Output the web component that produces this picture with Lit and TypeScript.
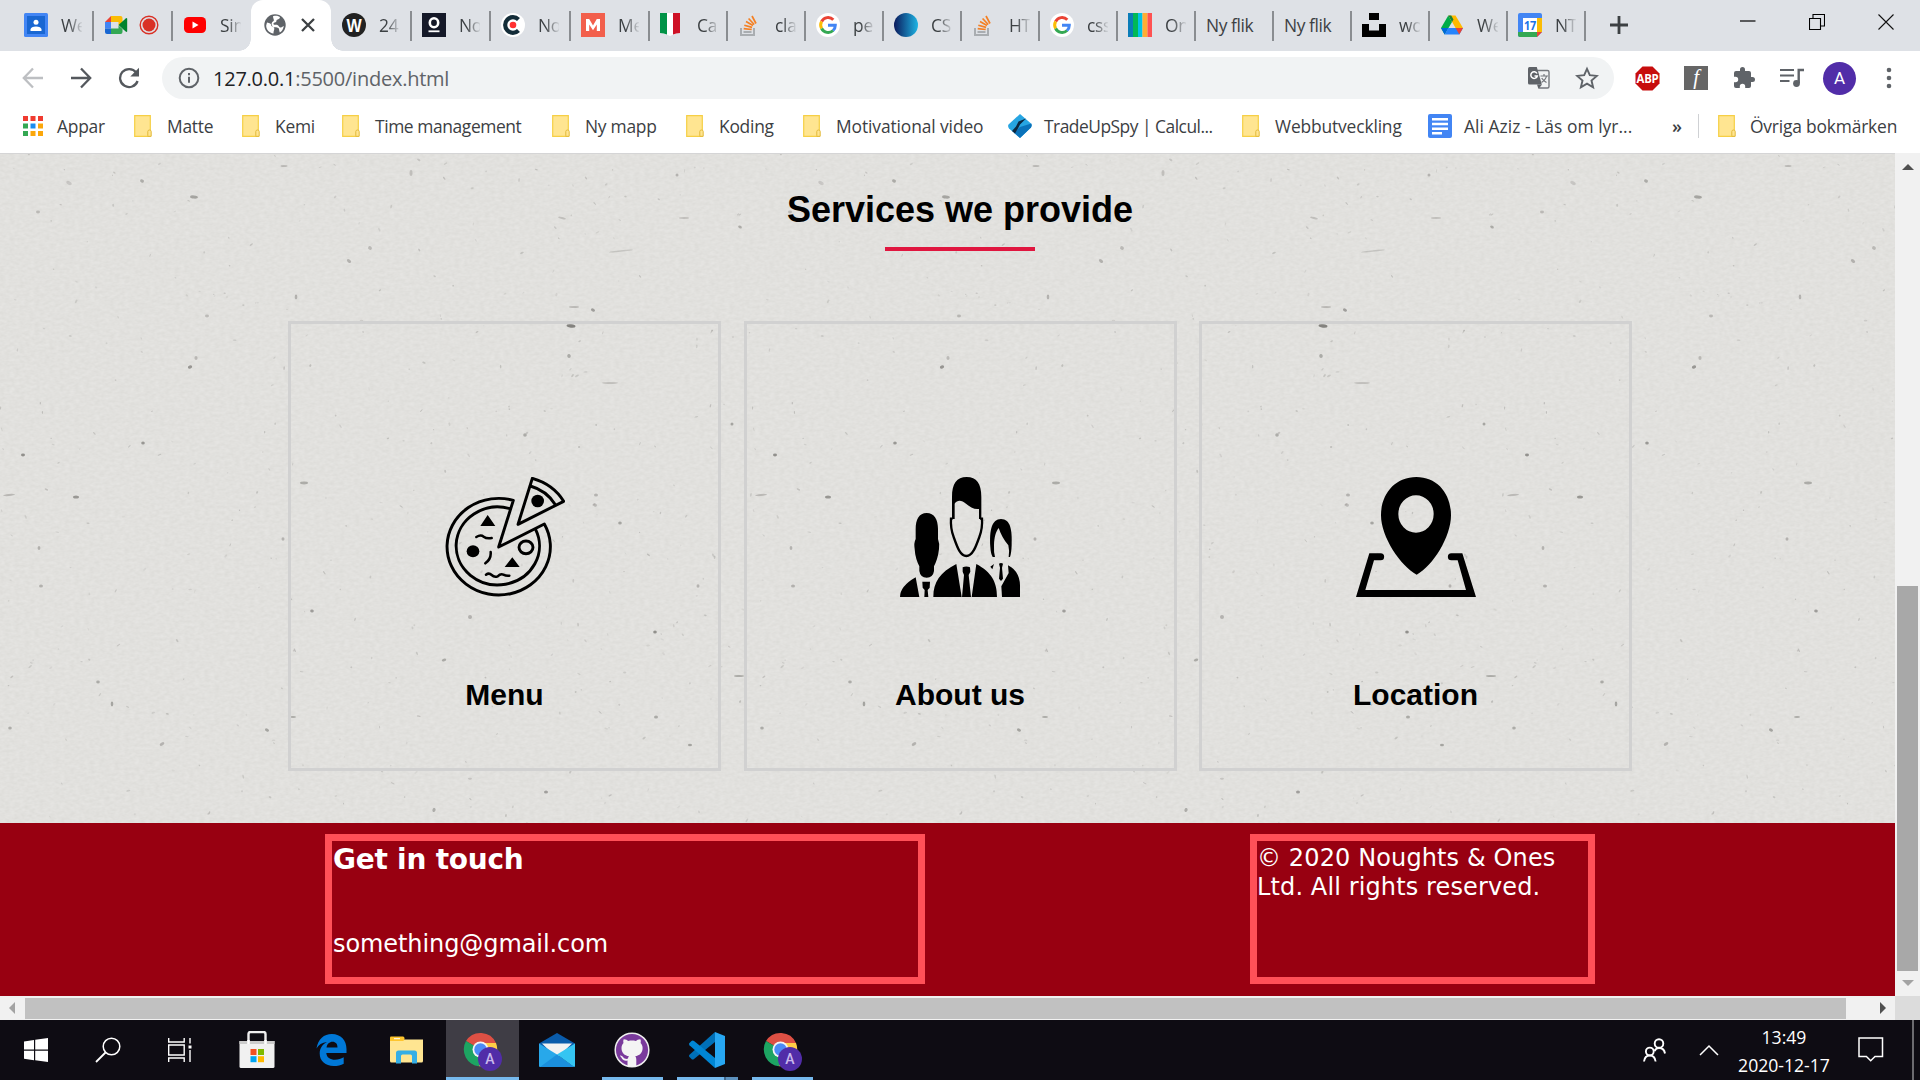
import { LitElement, html, svg, css, nothing } from "lit";
import type { TemplateResult } from "lit";
import { customElement } from "lit/decorators.js";
import { classMap } from "lit/directives/class-map.js";
import { styleMap } from "lit/directives/style-map.js";

type Icon = TemplateResult | typeof nothing;

const draw = (w: number, h: number, box: string, body: unknown) =>
  html`<svg width=${w} height=${h} viewBox=${box} preserveAspectRatio="none" fill="none" aria-hidden="true">${body}</svg>`;
const fav = (body: unknown) => draw(24, 24, "0 0 24 24", body);

/* ---------- favicons ---------- */
const classroom = fav(svg`<rect width="24" height="24" rx="1.5" fill="#4285f4"/><rect x="3" y="3" width="18" height="18" fill="#1967d2"/><circle cx="12" cy="9.3" r="2.5" fill="#fff"/><path d="M6.5 18v-1.6c0-2 2.5-3 5.500-3s5.500 1 5.500 3V18z" fill="#fff"/>`);
const meet = draw(23, 24, "0 0 23 24", svg`<path d="M0 9l6-6v6z" fill="#ea4335"/><path d="M6 3h9.500q2 0 2 2v4.500l-4 3V9H6z" fill="#fbbc04"/><path d="M0 9h6v6.500H0z" fill="#4285f4"/><path d="M0 15.500h6v5.500H2q-2 0-2-2z" fill="#1967d2"/><path d="M6 15.500h7.500v-3l4 3.500v3q0 2-2 2H6z" fill="#34a853"/><path d="M13.500 12l7.200-6.600q1.500-1 1.500.6v12q0 1.600-1.500.6z" fill="#00832d"/>`);
const rec = draw(20, 20, "0 0 20 20", svg`<circle cx="10" cy="10" r="8.800" stroke="#d93025" stroke-width="1.400"/><circle cx="10" cy="10" r="6.500" fill="#d93025"/>`);
const youtube = fav(svg`<rect x="1" y="4" width="22" height="16" rx="4.500" fill="#f00"/><path d="M9.500 8.500v7l6-3.500z" fill="#fff"/>`);
const globe = draw(24, 24, "0 0 24 24", svg`<circle cx="12" cy="12" r="10.700" fill="#5f6368"/><path d="M4 9.500c3 .5 4 1 4.300 3 .3 1.500 2.700 1 3 3 .2 1.500-1 2.500-.8 5C6 20 3 16 3.200 12.500zM10 3.200c4-.8 5.500 0 7 1-.5 2-2 2-3 2.500-1 .6 0 2-1.500 2.500-1.300.4-2.500.8-2 2 .6 1 2.500.2 4 .7 1.600.6 1.500 2.400 3 2.600 1.500.2 2.500-1.500 3.300-1.500-.3 3-2 5.300-4 6.500-1-2-.2-3.500-1.500-4.500-1.500-1-4.500.3-6-2C8 11 8.500 9 10.500 8c1-.6-.5-3-.5-4.800z" fill="#fff"/>`);
const dark24 = fav(svg`<circle cx="12" cy="12" r="12" fill="#222"/><text x="12" y="19" text-anchor="middle" font-family="Liberation Sans" font-weight="700" font-size="19" textLength="15" lengthAdjust="spacingAndGlyphs" fill="#fff">W</text>`);
const noughts = fav(svg`<rect width="24" height="24" fill="#151928"/><ellipse cx="12" cy="9.800" rx="4.200" ry="4.500" stroke="#fff" stroke-width="2.600"/><path d="M6.500 18.300h11" stroke="#fff" stroke-width="1.800"/>`);
const codecamp = fav(svg`<circle cx="12" cy="12" r="12" fill="#fff"/><path d="M17.500 6.500A7.800 7.800 0 1 0 17.500 17.500" stroke="#132c38" stroke-width="4.200"/><circle cx="12" cy="12" r="3.300" fill="#ff3131"/>`);
const mRed = fav(svg`<rect width="24" height="24" fill="#f25f4c"/><path d="M5 18V6h3.200L12 12.500 15.800 6H19v12h-3.200v-6.500L12 17.300 8.200 11.500V18z" fill="#fff"/>`);
const italy = draw(20, 24, "0 0 20 24", svg`<path d="M0 0h20v20q-4 0-10 3Q4 20 0 20z" fill="#fff"/><path d="M0 0h7v21.500Q4 20 0 20z" fill="#009246"/><path d="M13 0h7v20q-4 0-7 1.500z" fill="#ce1126"/>`);
const stack = fav(svg`<path d="M3 15v7h13v-7" stroke="#a9adb1" stroke-width="2"/><path d="M5.500 19h8" stroke="#a9adb1" stroke-width="2"/><path d="M5.700 15.700l8 .8M6.300 12.200l7.800 2.200M8 8.600l7 4M10.600 5.500l5.600 6M14 3l4 7.500" stroke="#f48024" stroke-width="1.700"/>`);
const google = fav(svg`<circle cx="12" cy="12" r="12" fill="#fff"/><path d="M17.300 6.700A7.300 7.300 0 0 0 5.600 8.500" stroke="#ea4335" stroke-width="3"/><path d="M5.600 8.500a7.300 7.300 0 0 0 0 7" stroke="#fbbc05" stroke-width="3"/><path d="M5.600 15.500a7.300 7.300 0 0 0 11.500 2" stroke="#34a853" stroke-width="3"/><path d="M17 17.500a7.300 7.300 0 0 0 2.300-5.300H12" stroke="#4285f4" stroke-width="3"/>`);
const cssOrb = fav(svg`<defs><linearGradient id="orb"><stop offset="0" stop-color="#0b1a5c"/><stop offset="1" stop-color="#1eb4e4"/></linearGradient></defs><circle cx="12" cy="12" r="12" fill="url(#orb)"/>`);
const stripes = fav(svg`<path d="M0 0h5v24H0z" fill="#0a7cb8"/><path d="M5 0h5v24H5z" fill="#00b956"/><path d="M10 0h4.500v24H10z" fill="#00c2e8"/><path d="M14.500 0h5v24h-5z" fill="#ffad33"/><path d="M19.500 0H24v24h-4.500z" fill="#ff5252"/>`);
const unsplash = fav(svg`<path d="M7 0h10v7H7zM0 11h7v6.500h10V11h7v13H0z" fill="#000"/>`);
const drive = draw(24, 24, "0 0 24 24", svg`<path d="M8.300 2.500L1 15l3.700 6.500L12 9z" fill="#00ac47"/><path d="M8.500 2.500h7L23 15h-7.400z" fill="#ffba00"/><path d="M8.300 2.500L12 9l1.500-2.500-2.300-4z" fill="#188038"/><path d="M1 15h7.300l-3.600 6.500z" fill="#0066da"/><path d="M8.300 15H23l-3.700 6.500H4.700z" fill="#2684fc"/><path d="M15.600 15H23l-3.700 6.500z" fill="#ea4335"/>`);
const calendar = fav(svg`<path d="M0 2q0-2 2-2h20q2 0 2 2v17l-5 5H2q-2 0-2-2z" fill="#4285f4"/><path d="M19 5h5v14h-5z" fill="#fbbc04"/><path d="M0 19h19v5H2q-2 0-2-2z" fill="#34a853"/><path d="M19 19h5l-5 5z" fill="#ea4335"/><path d="M5 5h14v14H5z" fill="#fff"/><text x="12" y="16.500" text-anchor="middle" font-family="Open Sans" font-weight="700" font-size="12" textLength="12" lengthAdjust="spacingAndGlyphs" fill="#1a73e8">17</text>`);

/* ---------- bookmark icons ---------- */
const apps = draw(20, 20, "0 0 20 20", svg`<path d="M0 0h5v5H0zM7.500 0h5v5h-5zM15 0h5v5h-5z" fill="#f03b30"/><path d="M0 7.500h5v5H0zM0 15h5v5H0z" fill="#34a853"/><path d="M7.500 7.500h5v5h-5z" fill="#1a8cf0"/><path d="M15 7.500h5v5h-5zM7.500 15h5v5h-5zM15 15h5v5h-5z" fill="#fba70b"/>`);
const folder = draw(18, 22, "0 0 18 22", svg`<path d="M.7.700h15.600v20.600H.7z" fill="#ffe591" stroke="#f6cf45" stroke-width="1.200"/><path d="M13.800 20.500v-4q0-1.500 1.700-1.500t1.700 1.500v4.800h-3.400z" fill="#ffe591" stroke="#e3b93a" stroke-width="1"/>`);
const trade = draw(24, 24, "0 0 24 24", svg`<path d="M12 0L23 9.500q1 1.500 0 4L12 24 1 14.500q-1.500-2-.5-4z" fill="#27a5e2"/><path d="M12 13L23.300 9.500q.8 2-.3 4L12 24 6 18.800z" fill="#0a72ba"/><path d="M18 4.500l-6 6-1.500 3-3.500 6-3-2.500 4-4.500 2.500-5z" fill="#0b2740"/>`);
const docs = draw(24, 24, "0 0 24 24", svg`<rect width="24" height="24" rx="2" fill="#4285f4"/><path d="M4 5.300h16M4 10h16M4 14.700h16M4 19.300h10" stroke="#fff" stroke-width="2.400"/>`);

/* ---------- toolbar icons ---------- */
const back = draw(22, 22, "0 0 22 22", svg`<path d="M21 11H2M11 1.500L1.800 11l9.200 9.500" stroke="#bdbfc2" stroke-width="2.300"/>`);
const forward = draw(22, 22, "0 0 22 22", svg`<path d="M1 11h19M11 1.500l9.200 9.500-9.200 9.500" stroke="#54585d" stroke-width="2.300"/>`);
const reload = draw(22, 22, "0 0 22 22", svg`<path d="M18.200 5.500a9 9 0 1 0 1.400 8.500" stroke="#54585d" stroke-width="2.300"/><path d="M21 .8v8.700h-8.700z" fill="#54585d"/>`);
const info = draw(22, 22, "0 0 22 22", svg`<circle cx="11" cy="11" r="9.300" stroke="#5f6368" stroke-width="2"/><path d="M11 9.800v6M11 6v2.200" stroke="#5f6368" stroke-width="2"/>`);
const translate = draw(22, 22, "0 0 22 22", svg`<path d="M9 3.500h10.500q1.500 0 1.500 1.500v14.500q0 1.500-1.500 1.500H11" stroke="#75787d" stroke-width="1.400"/><path d="M1.500 0h7.300l5 17.500H1.500Q0 17.500 0 16V1.500Q0 0 1.500 0z" fill="#5f6368"/><path d="M14 17.500L10.500 22 9 17.500z" fill="#5f6368"/><path d="M9 6.500A3.300 3.300 0 1 0 9.300 9H6.500" stroke="#fff" stroke-width="1.500"/><path d="M12.500 9h7.500M16 7v2M18.500 9c-.5 3-3 5-5 6.500M13.700 11c1 2 3 3.500 4.800 4.500" stroke="#75787d" stroke-width="1.200"/>`);
const star = draw(24, 24, "0 0 24 24", svg`<path d="M12 2.800l2.800 6.400 7 .7-5.300 4.600 1.600 6.800-6.100-3.600-6.100 3.600 1.600-6.800L2.200 9.900l7-.7z" stroke="#5f6368" stroke-width="1.900"/>`);
const abp = draw(25, 25, "0 0 25 25", svg`<path d="M7.500.5h10l7 7v10l-7 7h-10l-7-7v-10z" fill="#c70d0d"/><text x="12.500" y="17" text-anchor="middle" font-family="Open Sans" font-weight="700" font-size="12.500" textLength="22" lengthAdjust="spacingAndGlyphs" fill="#fff">ABP</text>`);
const fScript = draw(24, 24, "0 0 24 24", svg`<rect width="24" height="24" fill="#666"/><text x="12" y="17.500" text-anchor="middle" font-family="Liberation Serif" font-style="italic" font-size="21" fill="#fff">f</text>`);
const puzzle = draw(24, 24, "0 0 24 24", svg`<path d="M20.500 11H19V7a2 2 0 0 0-2-2h-4V3.500a2.500 2.500 0 0 0-5 0V5H4a2 2 0 0 0-2 2v3.800h1.500a2.700 2.700 0 0 1 0 5.400H2V20a2 2 0 0 0 2 2h3.800v-1.500a2.700 2.700 0 0 1 5.400 0V22H17a2 2 0 0 0 2-2v-4h1.500a2.500 2.500 0 0 0 0-5z" fill="#5f6368"/>`);
const playlist = draw(24, 20, "0 0 24 20", svg`<path d="M0 2h14M0 7.500h14M0 13h9.500" stroke="#5f6368" stroke-width="2.200"/><path d="M18.700 15V2H24" stroke="#5f6368" stroke-width="2.400"/><circle cx="16.500" cy="15.500" r="3.400" fill="#5f6368"/>`);
const menuDots = draw(6, 22, "0 0 6 22", svg`<circle cx="3" cy="3" r="2.300" fill="#5f6368"/><circle cx="3" cy="11" r="2.300" fill="#5f6368"/><circle cx="3" cy="19" r="2.300" fill="#5f6368"/>`);

/* ---------- service icons ---------- */
const pizza = draw(120, 120, "75 81 360 360", svg`
  <g stroke="#000" stroke-width="8.800" stroke-linejoin="round" stroke-linecap="round">
    <path d="M280 151A155 145 0 1 0 373 222L236 291Z"/>
    <path d="M270 176A125 117 0 1 0 347 239"/>
    <path d="M337 85Q400 103 431 154L294 223Z"/>
    <path d="M331 108Q380 122 405 163"/>
    <ellipse cx="318" cy="292" rx="21" ry="19"/>
    <path d="M169 261Q182 253 191 260T215 264M212 306Q214 327 196 340M198 374Q207 367 215 375T233 379Q242 370 250 374T268 377" stroke-width="7.500"/>
  </g>
  <g fill="#000"><circle cx="353" cy="153" r="19"/><ellipse cx="159" cy="304" rx="19" ry="18"/><path d="M181 228L203 195L226 228ZM254 351L277 322L299 351Z"/></g>`);
const people = draw(120, 120, "60 80 360 360", svg`
  <g fill="#000">
    <path d="M140 188C163 188 174 208 174 236V266Q179 278 177 296C175 318 168 336 162 348V362Q159 382 140 382Q121 382 118 362V348C112 336 105 318 104 296Q101 278 107 266V236C107 208 117 188 140 188Z"/>
    <path d="M60 440Q60 408 107 381L118 440ZM127 394H150L149 412L143 419L145 440H133L134 419L128 412Z"/>
    <path d="M160 440C160 395 180 366 229 341L245 440ZM351 440C351 395 335 366 289 341L275 440ZM248 351Q259 346 270 351L271 364L266 374L273 440H246L252 374L248 364Z"/>
    <path d="M216 206V140C216 100 230 80 260 80C290 80 304 100 304 140V206H297V176C282 178 270 170 258 160C245 149 232 148 224 160V206Z"/>
    <path d="M331 290C328 240 335 206 363 206C392 206 397 240 395 285Q394 310 390 320H386Q389 300 385 285C372 270 362 250 356 233C347 245 343 260 342 285Q341 305 345 320H338Q332 310 331 290Z"/>
    <path d="M366 440L364 408L386 368L384 345Q419 362 420 405V440ZM357 340Q363 336 369 340L366 352L369 385L363 392L357 385L360 352ZM331 349L342 341L337 357Z"/>
  </g>
  <path d="M218 205H213Q211 234 221 260C231 288 240 317 259 317C278 317 288 288 298 260Q308 234 306 205H300" stroke="#000" stroke-width="7"/>`);
const location = draw(120, 120, "78 80 360 360", svg`
  <path fill="#000" fill-rule="evenodd" d="M259 80C322 80 363 130 363 195C363 260 308 348 260 373C212 348 153 260 153 195C153 130 196 80 259 80ZM258 135A53 56 0 1 0 258 247A53 56 0 1 0 258 135Z"/>
  <path fill="#000" d="M78 440L118 309H152A10 10 0 0 1 152 330H132L106 419H408L383 330H364A10 10 0 0 1 364 309H397L438 440Z"/>`);

/* ---------- taskbar icons ---------- */
const windows = draw(24, 24, "0 0 24 24", svg`<path d="M0 3.400l10-1.400v9.500H0zM11.200 1.800L24 0v11.500H11.200zM0 12.700h10v9.500L0 20.800zM11.200 12.700H24V24l-12.800-1.700z" fill="#fff"/>`);
const search = draw(26, 26, "0 0 26 26", svg`<circle cx="16.500" cy="9.500" r="8.300" stroke="#fff" stroke-width="1.500"/><path d="M10.500 15.500L1 25" stroke="#fff" stroke-width="1.800"/>`);
const taskview = draw(24, 24, "0 0 24 24", svg`<path d="M.7 0v4h15.500V0M.7 24v-4h15.500v4M.7 7h15.500v10H.7zM22 0v5.500M22 12v12" stroke="#fff" stroke-width="1.400"/><path d="M20.500 7.500h3v3h-3z" fill="#fff"/>`);
const store = draw(36, 38, "0 0 36 38", svg`<path d="M9.500 14V3q0-2 2-2h13q2 0 2 2v11" stroke="#eee" stroke-width="2.400"/><path d="M.5 10h35v25.500q0 1.500-1.500 1.500H2q-1.500 0-1.500-1.500z" fill="#f1f1f1"/><path d="M.5 10h35v3H.5z" fill="#ccc"/><path d="M9.500 9v4M26.500 9v4" stroke="#fff" stroke-width="2.500"/><path d="M11.500 18h6v6h-6z" fill="#f25022"/><path d="M19 18h6v6h-6z" fill="#7fba00"/><path d="M11.500 25.200h6v6h-6z" fill="#00a4ef"/><path d="M19 25.200h6v6h-6z" fill="#ffb900"/>`);
const edge = draw(31, 32, "0 0 31 32", svg`<path d="M.5 14.500C2 5 8 0 15.800 0 25 0 30.500 6.500 30.500 15v4H10.300c.3 4.500 4 6.800 8.700 6.800 3.300 0 6-.9 8.700-2.500v6.400C25 31.200 21.500 32 17.700 32 9.500 32 3.700 27.300 3.700 19.600c0-5.200 2.700-9 7.300-11.500C6 8.700 2.500 11 .5 14.500zM10.500 13.500h11c0-3.500-1.800-5.700-5-5.700-3 0-5.400 2.200-6 5.700z" fill="#0078d7"/>`);
const explorer = draw(33, 28, "0 0 33 28", svg`<path d="M0 3.500h33V25q0 1.500-1.500 1.500h-30Q0 26.500 0 25z" fill="#ffe591"/><path d="M0 5V1.500Q0 .5 1 .5h12q1.500 0 1.500 2T13 5z" fill="#fec52e"/><path d="M4 2.700h6" stroke="#fff" stroke-width="1"/><path d="M6 27.500V17q0-2.500 2.500-2.500h16q2.500 0 2.500 2.500v10.500h-5V20q0-1.500-1.500-1.500h-8Q11 18.500 11 20v7.500z" fill="#35aee5"/>`);
const chrome = draw(40, 40, "0 0 40 40", svg`<path d="M17.500 17.500L3 9A17 17 0 0 1 33 11H17.500z" fill="#dd5044"/><path d="M17.500 17.500L3 9A17 17 0 0 0 16 34.300L24 21z" fill="#1da462"/><path d="M17.500 11H33A17 17 0 0 1 16 34.300L24 21z" fill="#ffcd46"/><circle cx="17.500" cy="17.500" r="8" fill="#f4f4f4"/><circle cx="17.500" cy="17.500" r="6.200" fill="#4c8bf5"/><circle cx="27" cy="27" r="12" fill="#512da8"/><text x="27" y="32" text-anchor="middle" font-family="Roboto" font-weight="500" font-size="14" fill="#c9b8ec">A</text>`);
const mail = draw(36, 34, "0 0 36 34", svg`<path d="M0 10.500L18 0l18 10.500V20H0z" fill="#0a5cab"/><path d="M3 10.500h30L18 25z" fill="#f2f2f2"/><path d="M0 10.500V33q0 1 1 1h34L18 21.500z" fill="#28a8ea"/><path d="M36 10.500L18 21.500 35 34q1 0 1-1z" fill="#35c5f2"/><path d="M1 34l17-12.500L35 34z" fill="#1b90dd"/>`);
const github = draw(36, 36, "0 0 36 36", svg`<circle cx="18" cy="18" r="16.800" fill="#7a3a9c" stroke="#eee" stroke-width="1.500"/><path d="M13.500 34v-5.500c-4.500 1-5.500-2-6.500-3.500-.6-.8-1-1-1-1.500 2.500-.5 3.500 3 5.500 3.300 1 .2 2 0 2.500-.3 0-1 .4-1.700 1-2.200C10.500 23.500 7.500 21 7.500 16c0-2 .8-3.700 2-5-.3-1-.4-3 .3-3.800 2 0 3.500 1 4.500 1.700 2.500-.6 5-.6 7.500 0 1-.7 2.500-1.700 4.500-1.700.7.800.6 2.800.3 3.800 1.200 1.300 2 3 2 5 0 5-3 7.500-7.500 8.300.8.700 1.200 1.700 1.200 3.200V34q-4.500 1.500-8.800 0z" fill="#f4f4f4"/>`);
const vscode = draw(36, 36, "0 0 36 36", svg`<path d="M26 0v10L5 27q-1.500 1-2.500 0l-2-2q-1-1 0-2.200z" fill="#0070b8"/><path d="M26 36V26L5 9Q3.500 8 2.500 9l-2 2q-1 1 0 2.200z" fill="#0086d4"/><path d="M26 0l10 4v28l-10 4z" fill="#27a7f2"/>`);
const contact = draw(23, 24, "0 0 23 24", svg`<circle cx="16" cy="5.500" r="4.300" stroke="#fff" stroke-width="1.900"/><path d="M11.500 13c1-2 2.500-3 4.500-3 3.500 0 5.500 2 6 5.500M1 23.500c.5-4 2.500-6 5.800-6s5.300 2 5.800 6" stroke="#fff" stroke-width="1.900"/><circle cx="6.800" cy="13.500" r="3.900" stroke="#fff" stroke-width="1.900"/>`);
const caret = draw(20, 12, "0 0 20 12", svg`<path d="M1 11l9-9 9 9" stroke="#fff" stroke-width="1.500"/>`);
const notice = draw(26, 26, "0 0 26 26", svg`<path d="M1 1h23.500v18.500h-7.500l-4.300 4.300-4.300-4.300H1z" stroke="#fff" stroke-width="1.500"/>`);

/* ---------- data ---------- */
interface Tab { width: number; icon: Icon; extra?: Icon; label?: string; active?: boolean; bare?: boolean; first?: boolean }
const tabs: Tab[] = [
  { width: 93, icon: classroom, label: "We", first: true },
  { width: 79, icon: meet, extra: rec },
  { width: 79, icon: youtube, label: "Sim", bare: true },
  { width: 80, icon: globe, active: true, bare: true },
  { width: 80, icon: dark24, label: "24" },
  { width: 79, icon: noughts, label: "No" },
  { width: 80, icon: codecamp, label: "No" },
  { width: 79, icon: mRed, label: "Me" },
  { width: 78, icon: italy, label: "Ca" },
  { width: 78, icon: stack, label: "cla" },
  { width: 78, icon: google, label: "pe" },
  { width: 78, icon: cssOrb, label: "CS" },
  { width: 78, icon: stack, label: "HT" },
  { width: 78, icon: google, label: "css" },
  { width: 78, icon: stripes, label: "On" },
  { width: 78, icon: nothing, label: "Ny flik" },
  { width: 78, icon: nothing, label: "Ny flik" },
  { width: 78, icon: unsplash, label: "wo" },
  { width: 78, icon: drive, label: "We" },
  { width: 78, icon: calendar, label: "NT" },
];

const bookmarks: { width: number; icon: Icon; label: string; track?: number }[] = [
  { width: 111, icon: apps, label: "Appar" },
  { width: 108, icon: folder, label: "Matte" },
  { width: 100, icon: folder, label: "Kemi" },
  { width: 210, icon: folder, label: "Time management", track: -0.4 },
  { width: 134, icon: folder, label: "Ny mapp" },
  { width: 117, icon: folder, label: "Koding" },
  { width: 205, icon: folder, label: "Motivational video", track: -0.1 },
  { width: 234, icon: trade, label: "TradeUpSpy | Calcul...", track: -0.5 },
  { width: 186, icon: folder, label: "Webbutveckling", track: -0.15 },
  { width: 244, icon: docs, label: "Ali Aziz - Läs om lyr...", track: 0.05 },
];

const services = [
  { icon: pizza, label: "Menu" },
  { icon: people, label: "About us" },
  { icon: location, label: "Location" },
];

const pinned: { icon: Icon; state?: "focused" | "open" | "stacked" }[] = [
  { icon: store }, { icon: edge }, { icon: explorer },
  { icon: chrome, state: "focused" }, { icon: mail },
  { icon: github, state: "open" }, { icon: vscode, state: "stacked" }, { icon: chrome, state: "open" },
];

/* Paper fibres: x, y, half length, half thickness, opacity, angle */
const fibres: number[][] = [
  [194,44,4,1.6,.45,5],[349,108,2.5,1.5,.35,40],[370,95,2,1.8,.3,30],[411,20,1.5,3,.25,0],[284,13,3.5,1,.3,0],
  [142,28,2,1.5,.4,20],[69,30,3,1.8,.2,30],[38,59,2,1.4,.3,0],[562,65,4,1,.25,15],[684,65,5,.9,.25,0],
  [740,74,2,1.3,.4,30],[621,98,12,.8,.22,-6],[296,144,1.3,2.4,.35,0],[574,154,5,1.1,.3,0],[593,157,2.2,1.5,.5,30],
  [571,173,4.500,1.7,.7,5],[569,203,1.8,2,.4,-10],[190,214,2.200,1.6,.55,-20],[196,205,1.6,2,.3,0],[207,163,2,1.4,.3,0],
  [143,290,1.8,1.6,.55,0],[23,302,2,1.4,.6,0],[76,344,3,1.6,.55,0],[9,342,6,1,.3,-5],[304,330,4,1.4,.4,0],
  [525,282,1.8,1.8,.4,0],[732,271,1.5,1.6,.45,0],[596,342,2,1.5,.35,0],[595,352,2,1.6,.3,20],[620,370,1.800,1.6,.45,0],
  [39,395,1.4,2,.35,0],[41,433,2,1.6,.35,0],[283,386,1.5,1.8,.35,0],[312,458,1.8,1.5,.5,10],[470,464,2,2,.35,0],
  [655,479,1.8,1.5,.6,0],[656,564,2,1.5,.4,0],[444,507,2.300,1.4,.4,-20],[112,551,1.3,2.4,.45,0],[98,529,1.8,1.400,.4,0],
  [162,591,2.500,1.5,.35,-30],[267,577,2.200,1.5,.45,30],[10,575,1.8,1.5,.4,0],[293,564,3,1,.4,0],[546,639,2,1.6,.5,0],
  [690,592,2,1.3,.45,0],[434,657,1.6,2,.4,20],[739,523,5,1,.4,0],[698,433,1.5,1.8,.35,0],[610,230,8,.9,.25,0],[677,22,1.500,1.5,.35,0],
];
let seed = 71;
const next = () => (seed = (seed * 16807) % 2147483647) / 2147483647;
const dust = Array.from({ length: 420 }, () => [next() * 752, next() * 752, 0.6 + next() * 1.500, 0.5 + next() * 0.5, 0.06 + next() * 0.16, next() * 180]);

const paper = html`<svg class="paper" width="1895" height="670" aria-hidden="true">
  <defs>
    <filter id="grain" x="0" y="0" width="100%" height="100%" color-interpolation-filters="sRGB">
      <feTurbulence type="fractalNoise" baseFrequency="0.2 0.34" numOctaves="2" seed="4"></feTurbulence>
      <feColorMatrix values="0.05 0 0 0 0.859  0.05 0 0 0 0.856  0.055 0 0 0 0.842  0 0 0 0 1"></feColorMatrix>
    </filter>
    <pattern id="fibres" width="752" height="752" patternUnits="userSpaceOnUse">
      ${[...fibres, ...dust].map(([x, y, rx, ry, o, a], i) => svg`<ellipse cx=${x} cy=${y} rx=${rx} ry=${ry} fill="#45433f" fill-opacity=${i < fibres.length ? o * 0.85 : o} transform="rotate(${a} ${x} ${y})"/>`)}
    </pattern>
  </defs>
  <rect width="1895" height="670" filter="url(#grain)"></rect>
  <rect width="1895" height="670" fill="url(#fibres)"></rect>
</svg>`;

@customElement("browser-chrome")
class BrowserChrome extends LitElement {
  static styles = css`
    :host { display: block; height: 153px; background: #fff; color: #3c4043; font-family: "Open Sans", "Noto Sans", sans-serif; font-size: 17.4px; letter-spacing: -0.25px; }
    svg { display: block; flex: none; }
    .strip { height: 51px; display: flex; background: #dee1e6; }
    .tab { flex: none; box-sizing: border-box; height: 51px; display: flex; align-items: center; padding: 0 0 1px 11px; position: relative; }
    .tab.first { padding-left: 24px; }
    .tab.sep::after { content: ""; position: absolute; right: -1px; top: 11px; width: 2px; height: 30px; background: #8a8d91; }
    .tab.active { background: #fff; border-radius: 12px 12px 0 0; gap: 14px; padding-left: 12px; }
    .tab.active::before, .tab.active::after { content: ""; position: absolute; bottom: 0; width: 12px; height: 12px; }
    .tab.active::before { left: -12px; background: radial-gradient(circle at 0 0, transparent 11.5px, #fff 12px); }
    .tab.active::after { right: -12px; background: radial-gradient(circle at 100% 0, transparent 11.5px, #fff 12px); }
    .slot { width: 24px; flex: none; display: flex; justify-content: center; }
    .slot.left { justify-content: flex-start; }
    .extra { margin-left: 11px; }
    .label { width: 21px; margin-left: 13px; overflow: hidden; white-space: nowrap; line-height: 26px; -webkit-mask-image: linear-gradient(90deg, #000 35%, transparent 105%); }
    .label.full { width: 58px; margin-left: 0; letter-spacing: -0.4px; -webkit-mask-image: none; }
    .plus { margin: 15px 0 0 24px; height: 20px; }
    .window { margin-left: auto; display: flex; gap: 53px; padding: 14px 26px 0 0; }
    .toolbar { height: 54px; display: flex; align-items: center; box-sizing: border-box; padding: 0 28px 0 22px; }
    .nav { display: flex; gap: 26px; }
    .omnibox { width: 1452px; height: 42px; flex: none; margin-left: 22px; border-radius: 21px; background: #f1f3f4; display: flex; align-items: center; box-sizing: border-box; padding: 0 15px 0 16px; }
    .url { margin-left: 13px; font-size: 20px; letter-spacing: -0.24px; color: #5f6368; line-height: 30px; padding-top: 1px; white-space: nowrap; }
    .host { color: #202124; }
    .actions { margin-left: auto; display: flex; align-items: center; gap: 25px; }
    .ext { display: flex; align-items: center; flex: 1; margin-left: 21px; }
    .ext svg + svg { margin-left: 24px; }
    .avatar { width: 33px; height: 33px; border-radius: 50%; background: #512da8; color: #fff; font-family: Roboto, sans-serif; font-size: 17px; display: grid; place-items: center; margin: 0 auto 0 19px; flex: none; }
    .marks { height: 48px; display: flex; align-items: center; box-sizing: border-box; padding: 0 0 6px 23px; }
    .mark { flex: none; display: flex; align-items: center; white-space: nowrap; line-height: 26px; }
    .mark svg + span { margin-left: 15px; }
    .mark.wide svg + span { margin-left: 12px; }
    .mark.first svg + span { margin-left: 14px; }
    .mark.last svg + span { margin-left: 14px; letter-spacing: -0.18px; }
    .more { width: 26px; flex: none; font-weight: 600; font-size: 18px; line-height: 26px; }
    .rule { width: 1px; height: 24px; background: #cfd1d4; margin-right: 19px; }
  `;
  render() {
    return html`
      <div class="strip">
        ${tabs.map((t) => html`
          <div class=${classMap({ tab: true, sep: !t.bare, active: !!t.active, first: !!t.first })} style=${styleMap({ width: `${t.width}px` })}>
            ${t.icon === nothing ? nothing : html`<span class=${classMap({ slot: true, left: t.icon === italy })}>${t.icon}</span>`}
            ${t.extra ? html`<span class="extra">${t.extra}</span>` : nothing}
            ${t.active ? draw(14, 14, "0 0 14 14", svg`<path d="M1 1l12 12M13 1L1 13" stroke="#3c4043" stroke-width="2.300"/>`) : nothing}
            ${t.label ? html`<span class=${classMap({ label: true, full: t.icon === nothing })}>${t.label}</span>` : nothing}
          </div>`)}
        <div class="plus">${draw(20, 20, "0 0 20 20", svg`<path d="M10 1v18M1 10h18" stroke="#3c4043" stroke-width="2.800"/>`)}</div>
        <div class="window">
          ${draw(16, 16, "0 0 16 16", svg`<path d="M0 7h15.500" stroke="#000" stroke-width="1.200"/>`)}
          ${draw(16, 16, "0 0 16 16", svg`<path d="M.5 4.500h11v11H.5zM4 4.500v-4h11.500V12H12" stroke="#000" stroke-width="1.100"/>`)}
          ${draw(16, 16, "0 0 16 16", svg`<path d="M.5.500l15 15M15.500.500l-15 15" stroke="#111" stroke-width="1.100"/>`)}
        </div>
      </div>
      <div class="toolbar">
        <div class="nav">${back}${forward}${reload}</div>
        <div class="omnibox">
          ${info}
          <span class="url"><span class="host">127.0.0.1</span>:5500/index.html</span>
          <span class="actions">${translate}${star}</span>
        </div>
        <div class="ext">
          ${abp}${fScript}${puzzle}${playlist}
          <span class="avatar">A</span>${menuDots}
        </div>
      </div>
      <div class="marks">
        ${bookmarks.map((b) => html`<div class=${classMap({ mark: true, first: b.icon === apps, wide: b.icon === trade || b.icon === docs })} style=${styleMap({ width: `${b.width}px`, letterSpacing: `${b.track ?? -0.25}px` })}>${b.icon}<span>${b.label}</span></div>`)}
        <span class="more">»</span><span class="rule"></span>
        <div class="mark last">${folder}<span>Övriga bokmärken</span></div>
      </div>`;
  }
}

@customElement("service-page")
class ServicePage extends LitElement {
  static styles = css`
    :host { display: block; width: 1895px; height: 843px; overflow: hidden; position: relative; background: #e2e1de; }
    svg { display: block; }
    .paper { position: absolute; left: 0; top: 0; }
    .content { position: relative; width: 1920px; height: 670px; box-sizing: border-box; border-top: 1px solid #d5d5d6; padding-top: 34px; font-family: "Liberation Sans", Arial, sans-serif; font-weight: 700; color: #000; text-align: center; }
    .title { margin: 0; font-size: 36px; line-height: 44px; }
    .bar { width: 150px; height: 4px; background: #e0163f; margin: 15px auto 0; }
    .cards { width: 1344px; margin: 70px auto 0; display: flex; justify-content: space-between; }
    .card { box-sizing: border-box; width: 433px; height: 450px; border: 3px solid #d1d1d1; display: flex; flex-direction: column; align-items: center; padding-top: 153px; }
    .name { margin: 0; padding-top: 78px; font-size: 30px; line-height: 40px; }
    .footer { position: relative; width: 1920px; height: 173px; box-sizing: border-box; background: #980011; padding: 11px 325px 0; display: flex; justify-content: space-between; font-family: "DejaVu Sans", Verdana, sans-serif; font-size: 24px; color: #fff; }
    .box { box-sizing: border-box; height: 150px; border: 7px solid #ff5058; }
    .touch { width: 600px; }
    .legal { width: 345px; line-height: 29px; padding-top: 3px; letter-spacing: 0.12px; white-space: nowrap; }
    .head { margin: 0; padding: 1px 0 0 1px; font-size: 28px; line-height: 36px; letter-spacing: -0.25px; }
    .mail { margin: 49px 0 0 1px; line-height: 34px; letter-spacing: -0.08px; }
  `;
  render() {
    return html`
      ${paper}
      <section class="content">
        <h1 class="title">Services we provide</h1>
        <div class="bar"></div>
        <div class="cards">
          ${services.map((s) => html`<article class="card">${s.icon}<h2 class="name">${s.label}</h2></article>`)}
        </div>
      </section>
      <footer class="footer">
        <div class="box touch"><h2 class="head">Get in touch</h2><p class="mail">something@gmail.com</p></div>
        <div class="box legal">© 2020 Noughts &amp; Ones<br>Ltd. All rights reserved.</div>
      </footer>`;
  }
}

@customElement("task-bar")
class TaskBar extends LitElement {
  static styles = css`
    :host { display: flex; height: 60px; background: #0e0c13; color: #fff; font-family: "Open Sans", "Noto Sans", sans-serif; font-size: 17.6px; }
    svg { display: block; flex: none; }
    .system { width: 72px; display: grid; place-items: center; flex: none; }
    .apps { display: flex; margin-left: 3px; }
    .app { width: 75px; height: 60px; box-sizing: border-box; padding: 0 0 1px; display: flex; flex-direction: column; align-items: center; justify-content: center; position: relative; }
    .app.focused { background: linear-gradient(#3f3d45, #3f3d45) 2px 0 / 73px 60px no-repeat; }
    .app.badge { padding: 3px 0 0 3px; }
    .line { position: absolute; bottom: 0; left: 8px; width: 61px; height: 3px; background: #76b9ed; }
    .focused .line { left: 2px; width: 73px; }
    .stacked .line { background: linear-gradient(90deg, #76b9ed 47px, #41678a 47px, #41678a 49px, #5d91bd 49px); }
    .tray { margin-left: auto; display: flex; align-items: center; }
    .caret { margin: 0 16px 0 33px; }
    .clock { width: 98px; text-align: center; line-height: 28px; letter-spacing: 0; margin: 1px 25px 0 0; white-space: nowrap; }
    .peek { width: 6px; height: 60px; margin-left: 28px; border-left: 2px solid #6c6b70; }
  `;
  render() {
    return html`
      <span class="system">${windows}</span><span class="system">${search}</span><span class="system">${taskview}</span>
      <div class="apps">
        ${pinned.map((p) => html`<div class=${classMap({ app: true, badge: p.icon === chrome, focused: p.state === "focused", stacked: p.state === "stacked" })}>${p.icon}${p.state ? html`<i class="line"></i>` : nothing}</div>`)}
      </div>
      <div class="tray">${contact}<span class="caret">${caret}</span>
        <div class="clock">13:49<br>2020-12-17</div>${notice}<span class="peek"></span></div>`;
  }
}

@customElement("app-root")
class AppRoot extends LitElement {
  static styles = css`
    :host { display: block; width: 1920px; height: 1080px; overflow: hidden; }
    .middle { display: flex; }
    .vbar { width: 25px; height: 843px; background: #f1f1f1; display: flex; flex-direction: column; align-items: center; box-sizing: border-box; padding: 11px 0 10px; }
    .hbar { height: 24px; display: flex; align-items: center; background: #f1f1f1; }
    .up, .down, .left, .right { width: 0; height: 0; flex: none; border: 6px solid transparent; }
    .up { border-top: 0; border-bottom-color: #505050; }
    .down { border-bottom: 0; border-top-color: #a3a3a3; }
    .left { border-left: 0; border-right-color: #a3a3a3; margin: 0 10px 0 9px; }
    .right { border-right: 0; border-left-color: #505050; margin: 0 9px 0 34px; }
    .vthumb { width: 21px; height: 385px; background: #a8a8a8; margin: auto 0 9px; }
    .hthumb { width: 1821px; height: 21px; background: #c1c1c1; flex: none; }
    .corner { width: 25px; height: 24px; background: #dcdcdc; margin-left: auto; }
  `;
  render() {
    return html`
      <browser-chrome></browser-chrome>
      <div class="middle"><service-page></service-page><div class="vbar"><i class="up"></i><i class="vthumb"></i><i class="down"></i></div></div>
      <div class="hbar"><i class="left"></i><i class="hthumb"></i><i class="right"></i><i class="corner"></i></div>
      <task-bar></task-bar>`;
  }
}
